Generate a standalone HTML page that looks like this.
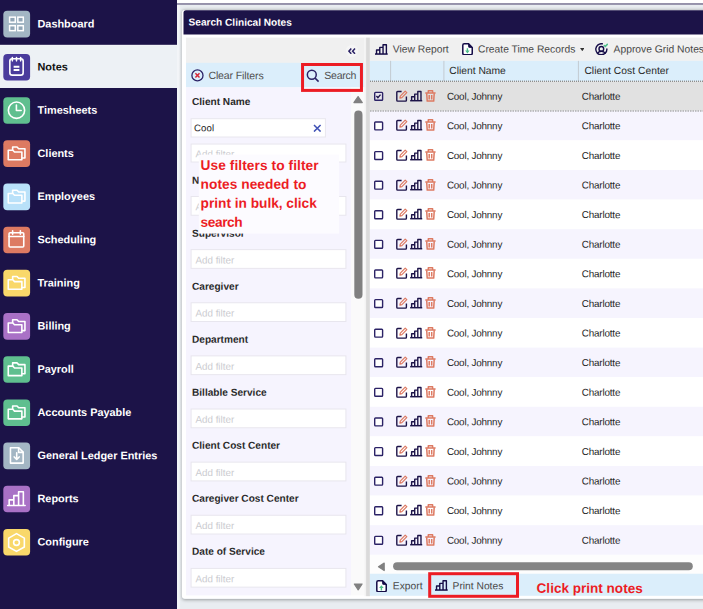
<!DOCTYPE html>
<html><head><meta charset="utf-8"><title>Search Clinical Notes</title>
<style>
*{box-sizing:border-box;margin:0;padding:0}
html,body{width:703px;height:609px;overflow:hidden}
body{position:relative;background:linear-gradient(90deg,#f3f5f8 0,#f3f5f8 179.2px,#e9edf1 180.6px);font-family:"Liberation Sans",sans-serif;color:#222}
.abs{position:absolute}
svg{display:block}
.t{position:absolute;left:0;top:0;transform-origin:0 0;white-space:nowrap;line-height:1}
.ic{position:absolute;left:3.3px;width:26.8px;height:26.8px;border-radius:4px}
.ic svg{width:26.8px;height:26.8px}
.lb{position:absolute;left:37.5px;font-size:10.9px;font-weight:bold;white-space:nowrap;line-height:13px}
.flabel{position:absolute;left:192px;font-size:10.1px;font-weight:bold;color:#2a2a2a;white-space:nowrap;line-height:12px}
</style></head><body>
<div class="abs" style="left:182px;top:10px;width:540px;height:588.5px;border-radius:3px;box-shadow:0 0.5px 3.5px rgba(0,0,0,.34)"></div>
<svg class="abs" style="left:0;top:0" width="703" height="609" viewBox="0 0 703 609">
<rect x="177.00" y="0.00" width="526.00" height="3.20" fill="#fff"/>
<rect x="177.00" y="3.20" width="526.00" height="1.55" fill="#7f7a98"/>
<defs><linearGradient id="sh" x1="0" x2="1" y1="0" y2="0"><stop offset="0" stop-color="#f3f5f8"/><stop offset=".4" stop-color="#eceff2"/><stop offset=".96" stop-color="#d5d8dd"/></linearGradient><linearGradient id="shb" x1="0" x2="0" y1="0" y2="1"><stop offset="0" stop-color="#b9bcc1"/><stop offset=".5" stop-color="#d6d9de"/><stop offset="1" stop-color="#e9edf1"/></linearGradient></defs>
<rect x="0.00" y="0.00" width="177.00" height="609.00" fill="#1c1348"/>
<rect x="0.00" y="44.90" width="177.00" height="43.10" fill="#edf1f5"/>
<rect x="0.00" y="44.90" width="177.00" height="0.80" fill="#f4f6f9"/>
<path d="M703 10.2H184.9a3 3 0 0 0-3 3V595.6a3 3 0 0 0 3 3H703z" fill="#fff"/>
<path d="M703 10.2H186a2.5 2.5 0 0 0-2.5 2.5V34.5H703z" fill="#1c1348"/>
<rect x="186.00" y="37.60" width="178.60" height="25.30" fill="#f0f0f0"/>
<circle cx="352" cy="51" r="6.2" fill="#f5f5f5"/>
<rect x="186.00" y="62.80" width="178.60" height="24.60" fill="#dbeefb"/>
<rect x="186.00" y="87.40" width="165.00" height="508.00" fill="#f6f4fe"/>
<rect x="351.00" y="87.40" width="13.60" height="508.00" fill="#fafafa"/>
<rect x="364.40" y="37.60" width="1.80" height="558.60" fill="#f3f3f3"/>
<rect x="366.10" y="37.60" width="3.80" height="558.60" fill="#dadada"/>
<rect x="369.90" y="37.60" width="333.10" height="23.30" fill="#f0f0f0"/>
<rect x="369.90" y="60.85" width="333.10" height="20.40" fill="#dbeefb"/>
<rect x="390.10" y="60.85" width="1.00" height="20.40" fill="#c3cad1"/>
<rect x="443.40" y="60.85" width="1.00" height="20.40" fill="#c3cad1"/>
<rect x="577.90" y="60.85" width="1.00" height="20.40" fill="#c3cad1"/>
<rect x="369.90" y="81.20" width="333.10" height="29.62" fill="#e1e1e1"/>
<rect x="369.90" y="110.80" width="333.10" height="29.62" fill="#f6f4fe"/>
<rect x="369.90" y="140.40" width="333.10" height="29.62" fill="#fff"/>
<rect x="369.90" y="170.00" width="333.10" height="29.62" fill="#f6f4fe"/>
<rect x="369.90" y="199.60" width="333.10" height="29.62" fill="#fff"/>
<rect x="369.90" y="229.20" width="333.10" height="29.62" fill="#f6f4fe"/>
<rect x="369.90" y="258.80" width="333.10" height="29.62" fill="#fff"/>
<rect x="369.90" y="288.40" width="333.10" height="29.62" fill="#f6f4fe"/>
<rect x="369.90" y="318.00" width="333.10" height="29.62" fill="#fff"/>
<rect x="369.90" y="347.60" width="333.10" height="29.62" fill="#f6f4fe"/>
<rect x="369.90" y="377.20" width="333.10" height="29.62" fill="#fff"/>
<rect x="369.90" y="406.80" width="333.10" height="29.62" fill="#f6f4fe"/>
<rect x="369.90" y="436.40" width="333.10" height="29.62" fill="#fff"/>
<rect x="369.90" y="466.00" width="333.10" height="29.62" fill="#f6f4fe"/>
<rect x="369.90" y="495.60" width="333.10" height="29.62" fill="#fff"/>
<rect x="369.90" y="525.20" width="333.10" height="29.62" fill="#f6f4fe"/>
<rect x="369.90" y="554.80" width="333.10" height="19.40" fill="#fdfdfd"/>
<rect x="369.90" y="573.75" width="333.10" height="22.05" fill="#dbeefb"/>
<rect x="393.10" y="562.20" width="299.70" height="8.10" fill="#848484" rx="4.05"/>
<path d="M384.2 563.1L378.5 566.8 384.2 570.5z" fill="#808080" stroke="#808080" stroke-width="1.2" stroke-linejoin="round"/>
<path d="M353.9 102.6L358.1 96.6 362.3 102.6z" fill="#808080" stroke="#808080" stroke-width="1.2" stroke-linejoin="round"/>
<rect x="354.30" y="110.60" width="8.20" height="188.20" fill="#808080" rx="4.1"/>
<path d="M354.3 584L358.2 589.8 362.1 584z" fill="#808080" stroke="#808080" stroke-width="1.2" stroke-linejoin="round"/>
<rect x="3.3" y="10.85" width="26.8" height="26.6" rx="4" fill="#a3b6c4"/><g transform="translate(3.3,10.75) scale(0.9926)"><g stroke="#fff" fill="none" stroke-width="1.6" stroke-linejoin="round" stroke-linecap="round"><g fill="#91a5b6" stroke-width="1.5" stroke-linejoin="miter"><rect x="6.35" y="6.45" width="5.7" height="5.1"/><rect x="14.65" y="6.45" width="5.5" height="5.1"/><rect x="6.35" y="15.05" width="5.7" height="5"/><rect x="14.65" y="15.05" width="5.5" height="5"/></g></g></g>
<rect x="3.3" y="54.02" width="26.8" height="26.6" rx="4" fill="#4a3b9c"/><g transform="translate(3.3,53.92) scale(0.9926)"><g stroke="#fff" fill="none" stroke-width="1.6" stroke-linejoin="round" stroke-linecap="round"><rect x="6.6" y="4.8" width="13.4" height="16.6" rx="2.4"/><path d="M9.1 3.6v3.4M13.3 3.6v3.4M17.5 3.6v3.4"/><path d="M10.4 12.9h5.8M10.4 16.1h5.8" stroke-width="2" stroke-linecap="butt"/></g></g>
<rect x="3.3" y="97.19" width="26.8" height="26.6" rx="4" fill="#5fbf8f"/><g transform="translate(3.3,97.09) scale(0.9926)"><g stroke="#fff" fill="none" stroke-width="1.6" stroke-linejoin="round" stroke-linecap="round"><circle cx="13.3" cy="13.2" r="8.2"/><path d="M13.2 8v5.5h4.8"/></g></g>
<rect x="3.3" y="140.36" width="26.8" height="26.6" rx="4" fill="#dd7a62"/><g transform="translate(3.3,140.26) scale(0.9926)"><g stroke="#fff" fill="none" stroke-width="1.6" stroke-linejoin="round" stroke-linecap="round"><path d="M9.4 9.6V6.8h4.4l1.7 1.8h6.3v9.2h-2.6"/><path d="M5 10.1h4.6l1.7 1.8h7.4v7.8H5z"/></g></g>
<rect x="3.3" y="183.53" width="26.8" height="26.6" rx="4" fill="#b9e1f9"/><g transform="translate(3.3,183.43) scale(0.9926)"><g stroke="#fff" fill="none" stroke-width="1.6" stroke-linejoin="round" stroke-linecap="round"><path d="M9.4 9.6V6.8h4.4l1.7 1.8h6.3v9.2h-2.6"/><path d="M5 10.1h4.6l1.7 1.8h7.4v7.8H5z"/></g></g>
<rect x="3.3" y="226.70" width="26.8" height="26.6" rx="4" fill="#dd7a62"/><g transform="translate(3.3,226.60) scale(0.9926)"><g stroke="#fff" fill="none" stroke-width="1.6" stroke-linejoin="round" stroke-linecap="round"><rect x="5.8" y="6.2" width="14.8" height="14.4" rx="1"/><path d="M5.8 9.9h14.8M9.4 4.3v3.3M17.2 4.3v3.3"/></g></g>
<rect x="3.3" y="269.87" width="26.8" height="26.6" rx="4" fill="#f9d86a"/><g transform="translate(3.3,269.77) scale(0.9926)"><g stroke="#fff" fill="none" stroke-width="1.6" stroke-linejoin="round" stroke-linecap="round"><path d="M9.4 9.6V6.8h4.4l1.7 1.8h6.3v9.2h-2.6"/><path d="M5 10.1h4.6l1.7 1.8h7.4v7.8H5z"/></g></g>
<rect x="3.3" y="313.04" width="26.8" height="26.6" rx="4" fill="#a971c6"/><g transform="translate(3.3,312.94) scale(0.9926)"><g stroke="#fff" fill="none" stroke-width="1.6" stroke-linejoin="round" stroke-linecap="round"><path d="M9.4 9.6V6.8h4.4l1.7 1.8h6.3v9.2h-2.6"/><path d="M5 10.1h4.6l1.7 1.8h7.4v7.8H5z"/></g></g>
<rect x="3.3" y="356.21" width="26.8" height="26.6" rx="4" fill="#5fbf8f"/><g transform="translate(3.3,356.11) scale(0.9926)"><g stroke="#fff" fill="none" stroke-width="1.6" stroke-linejoin="round" stroke-linecap="round"><path d="M9.4 9.6V6.8h4.4l1.7 1.8h6.3v9.2h-2.6"/><path d="M5 10.1h4.6l1.7 1.8h7.4v7.8H5z"/></g></g>
<rect x="3.3" y="399.38" width="26.8" height="26.6" rx="4" fill="#5fbf8f"/><g transform="translate(3.3,399.28) scale(0.9926)"><g stroke="#fff" fill="none" stroke-width="1.6" stroke-linejoin="round" stroke-linecap="round"><path d="M9.4 9.6V6.8h4.4l1.7 1.8h6.3v9.2h-2.6"/><path d="M5 10.1h4.6l1.7 1.8h7.4v7.8H5z"/></g></g>
<rect x="3.3" y="442.55" width="26.8" height="26.6" rx="4" fill="#a3b6c4"/><g transform="translate(3.3,442.45) scale(0.9926)"><g stroke="#fff" fill="none" stroke-width="1.6" stroke-linejoin="round" stroke-linecap="round"><path d="M7.2 5.4h8.4l4.4 4.4v11H7.2z"/><path d="M15.4 5.6v4.4h4.4"/><path d="M13.5 10.4v6.6M11 14.6l2.5 2.6 2.5-2.6"/></g></g>
<rect x="3.3" y="485.72" width="26.8" height="26.6" rx="4" fill="#a971c6"/><g transform="translate(3.3,485.62) scale(0.9926)"><g stroke="#fff" fill="none" stroke-width="1.6" stroke-linejoin="round" stroke-linecap="round"><path d="M5.9 19.9V14.4H10.6V19.9M10.6 19.9V10.1H15.4V19.9M15.4 19.9V6.2H20.2V19.9M4.4 19.95H22"/></g></g>
<rect x="3.3" y="528.89" width="26.8" height="26.6" rx="4" fill="#f9d86a"/><g transform="translate(3.3,528.79) scale(0.9926)"><g stroke="#fff" fill="none" stroke-width="1.6" stroke-linejoin="round" stroke-linecap="round"><path d="M13.3 4.9l7.9 4.5v8.9l-7.9 4.5-7.9-4.5V9.4z"/><circle cx="13.3" cy="13.8" r="2.9"/></g></g>
<rect x="191.1" y="118.70" width="134.30" height="18.30" fill="#fff" stroke="#e8e6ee" stroke-width="1"/>
<rect x="191.1" y="144.05" width="154.80" height="17.95" fill="#fff" stroke="#e8e6ee" stroke-width="1"/>
<rect x="191.1" y="196.49" width="154.80" height="18.75" fill="#fff" stroke="#e8e6ee" stroke-width="1"/>
<rect x="191.1" y="249.62" width="154.80" height="18.75" fill="#fff" stroke="#e8e6ee" stroke-width="1"/>
<rect x="191.1" y="302.75" width="154.80" height="18.75" fill="#fff" stroke="#e8e6ee" stroke-width="1"/>
<rect x="191.1" y="355.88" width="154.80" height="18.75" fill="#fff" stroke="#e8e6ee" stroke-width="1"/>
<rect x="191.1" y="409.01" width="154.80" height="18.75" fill="#fff" stroke="#e8e6ee" stroke-width="1"/>
<rect x="191.1" y="462.14" width="154.80" height="18.75" fill="#fff" stroke="#e8e6ee" stroke-width="1"/>
<rect x="191.1" y="515.27" width="154.80" height="18.75" fill="#fff" stroke="#e8e6ee" stroke-width="1"/>
<rect x="191.1" y="568.40" width="154.80" height="18.75" fill="#fff" stroke="#e8e6ee" stroke-width="1"/>
<rect x="374.7" y="92.40" width="7.9" height="7.9" rx="0.8" fill="#e9e7ef" stroke="#2b2266" stroke-width="1.4"/>
<path d="M376.4 96.10l1.5 1.5 2.6-3" fill="none" stroke="#1c1348" stroke-width="1.4"/>
<rect x="374.7" y="122.00" width="7.9" height="7.9" rx="0.8" fill="#fff" stroke="#2b2266" stroke-width="1.4"/>
<rect x="374.7" y="151.60" width="7.9" height="7.9" rx="0.8" fill="#fff" stroke="#2b2266" stroke-width="1.4"/>
<rect x="374.7" y="181.20" width="7.9" height="7.9" rx="0.8" fill="#fff" stroke="#2b2266" stroke-width="1.4"/>
<rect x="374.7" y="210.80" width="7.9" height="7.9" rx="0.8" fill="#fff" stroke="#2b2266" stroke-width="1.4"/>
<rect x="374.7" y="240.40" width="7.9" height="7.9" rx="0.8" fill="#fff" stroke="#2b2266" stroke-width="1.4"/>
<rect x="374.7" y="270.00" width="7.9" height="7.9" rx="0.8" fill="#fff" stroke="#2b2266" stroke-width="1.4"/>
<rect x="374.7" y="299.60" width="7.9" height="7.9" rx="0.8" fill="#fff" stroke="#2b2266" stroke-width="1.4"/>
<rect x="374.7" y="329.20" width="7.9" height="7.9" rx="0.8" fill="#fff" stroke="#2b2266" stroke-width="1.4"/>
<rect x="374.7" y="358.80" width="7.9" height="7.9" rx="0.8" fill="#fff" stroke="#2b2266" stroke-width="1.4"/>
<rect x="374.7" y="388.40" width="7.9" height="7.9" rx="0.8" fill="#fff" stroke="#2b2266" stroke-width="1.4"/>
<rect x="374.7" y="418.00" width="7.9" height="7.9" rx="0.8" fill="#fff" stroke="#2b2266" stroke-width="1.4"/>
<rect x="374.7" y="447.60" width="7.9" height="7.9" rx="0.8" fill="#fff" stroke="#2b2266" stroke-width="1.4"/>
<rect x="374.7" y="477.20" width="7.9" height="7.9" rx="0.8" fill="#fff" stroke="#2b2266" stroke-width="1.4"/>
<rect x="374.7" y="506.80" width="7.9" height="7.9" rx="0.8" fill="#fff" stroke="#2b2266" stroke-width="1.4"/>
<rect x="374.7" y="536.40" width="7.9" height="7.9" rx="0.8" fill="#fff" stroke="#2b2266" stroke-width="1.4"/>
</svg>
<div class="t" style="transform:translate(37.50px,18.40px) rotate(0.05deg);font-size:10.9px;color:#fff;font-weight:bold">Dashboard</div>
<div class="t" style="transform:translate(37.50px,61.57px) rotate(0.05deg);font-size:10.9px;color:#111;font-weight:bold">Notes</div>
<div class="t" style="transform:translate(37.50px,104.74px) rotate(0.05deg);font-size:10.9px;color:#fff;font-weight:bold">Timesheets</div>
<div class="t" style="transform:translate(37.50px,147.91px) rotate(0.05deg);font-size:10.9px;color:#fff;font-weight:bold">Clients</div>
<div class="t" style="transform:translate(37.50px,191.08px) rotate(0.05deg);font-size:10.9px;color:#fff;font-weight:bold">Employees</div>
<div class="t" style="transform:translate(37.50px,234.25px) rotate(0.05deg);font-size:10.9px;color:#fff;font-weight:bold">Scheduling</div>
<div class="t" style="transform:translate(37.50px,277.42px) rotate(0.05deg);font-size:10.9px;color:#fff;font-weight:bold">Training</div>
<div class="t" style="transform:translate(37.50px,320.59px) rotate(0.05deg);font-size:10.9px;color:#fff;font-weight:bold">Billing</div>
<div class="t" style="transform:translate(37.50px,363.76px) rotate(0.05deg);font-size:10.9px;color:#fff;font-weight:bold">Payroll</div>
<div class="t" style="transform:translate(37.50px,406.93px) rotate(0.05deg);font-size:10.9px;color:#fff;font-weight:bold">Accounts Payable</div>
<div class="t" style="transform:translate(37.50px,450.10px) rotate(0.05deg);font-size:10.9px;color:#fff;font-weight:bold">General Ledger Entries</div>
<div class="t" style="transform:translate(37.50px,493.27px) rotate(0.05deg);font-size:10.9px;color:#fff;font-weight:bold">Reports</div>
<div class="t" style="transform:translate(37.50px,536.44px) rotate(0.05deg);font-size:10.9px;color:#fff;font-weight:bold">Configure</div>
<div class="t" style="transform:translate(188.60px,17.60px) rotate(0.05deg);font-size:10.1px;color:#fff;font-weight:bold">Search Clinical Notes</div>
<svg class="abs" style="left:348.1px;top:47.8px" width="7.8" height="6.4" viewBox="0 0 7.8 6.4"><path d="M3.3 0.6L0.9 3.2l2.4 2.6M7 0.6L4.6 3.2 7 5.8" fill="none" stroke="#2b2266" stroke-width="1.5"/></svg>
<svg class="abs" style="left:190.6px;top:69px" width="13" height="13" viewBox="0 0 13 13"><circle cx="6.45" cy="6.4" r="5.55" fill="none" stroke="#2b2266" stroke-width="1.3"/><path d="M4.4 4.3l4.1 4.2M8.5 4.3L4.4 8.5" stroke="#d62839" stroke-width="1.5" fill="none"/></svg>
<div class="t" style="transform:translate(208.40px,70.10px) rotate(0.05deg);font-size:10.55px;color:#505050;letter-spacing:-0.13px">Clear Filters</div>
<svg class="abs" style="left:306px;top:68.6px" width="14" height="14" viewBox="0 0 14 14"><circle cx="5.8" cy="5.8" r="4.45" fill="none" stroke="#2b2266" stroke-width="1.5"/><path d="M9.1 9.1l3.5 3.5" stroke="#2b2266" stroke-width="1.5" fill="none"/></svg>
<div class="t" style="transform:translate(324.30px,70.10px) rotate(0.05deg);font-size:10.55px;color:#505050;letter-spacing:-0.27px">Search</div>
<div class="t" style="transform:translate(192.00px,97.05px) rotate(0.05deg);font-size:10.1px;color:#2a2a2a;font-weight:bold">Client Name</div>
<div class="t" style="transform:translate(192.00px,175.65px) rotate(0.05deg);font-size:10.1px;color:#2a2a2a;font-weight:bold">Note Type</div>
<div class="t" style="transform:translate(192.00px,228.65px) rotate(0.05deg);font-size:10.1px;color:#2a2a2a;font-weight:bold">Supervisor</div>
<div class="t" style="transform:translate(192.00px,281.65px) rotate(0.05deg);font-size:10.1px;color:#2a2a2a;font-weight:bold">Caregiver</div>
<div class="t" style="transform:translate(192.00px,334.65px) rotate(0.05deg);font-size:10.1px;color:#2a2a2a;font-weight:bold">Department</div>
<div class="t" style="transform:translate(192.00px,387.65px) rotate(0.05deg);font-size:10.1px;color:#2a2a2a;font-weight:bold">Billable Service</div>
<div class="t" style="transform:translate(192.00px,440.65px) rotate(0.05deg);font-size:10.1px;color:#2a2a2a;font-weight:bold">Client Cost Center</div>
<div class="t" style="transform:translate(192.00px,493.65px) rotate(0.05deg);font-size:10.1px;color:#2a2a2a;font-weight:bold">Caregiver Cost Center</div>
<div class="t" style="transform:translate(192.00px,546.65px) rotate(0.05deg);font-size:10.1px;color:#2a2a2a;font-weight:bold">Date of Service</div>
<div class="t" style="transform:translate(194.00px,123.20px) rotate(0.05deg);font-size:9.6px;color:#1c1c1c;letter-spacing:0.15px">Cool</div>
<svg class="abs" style="left:313.3px;top:123.8px" width="8.6" height="8.6" viewBox="0 0 8.6 8.6"><path d="M1 1l6.6 6.6M7.6 1L1 7.6" stroke="#3f51b5" stroke-width="1.5" fill="none"/></svg>
<div class="t" style="transform:translate(195.50px,149.30px) rotate(0.05deg);font-size:9.8px;color:#cbcbd0">Add filter</div>
<div class="t" style="transform:translate(195.50px,202.29px) rotate(0.05deg);font-size:9.8px;color:#cbcbd0">Add filter</div>
<div class="t" style="transform:translate(195.50px,255.42px) rotate(0.05deg);font-size:9.8px;color:#cbcbd0">Add filter</div>
<div class="t" style="transform:translate(195.50px,308.55px) rotate(0.05deg);font-size:9.8px;color:#cbcbd0">Add filter</div>
<div class="t" style="transform:translate(195.50px,361.68px) rotate(0.05deg);font-size:9.8px;color:#cbcbd0">Add filter</div>
<div class="t" style="transform:translate(195.50px,414.81px) rotate(0.05deg);font-size:9.8px;color:#cbcbd0">Add filter</div>
<div class="t" style="transform:translate(195.50px,467.94px) rotate(0.05deg);font-size:9.8px;color:#cbcbd0">Add filter</div>
<div class="t" style="transform:translate(195.50px,521.07px) rotate(0.05deg);font-size:9.8px;color:#cbcbd0">Add filter</div>
<div class="t" style="transform:translate(195.50px,574.20px) rotate(0.05deg);font-size:9.8px;color:#cbcbd0">Add filter</div>
<svg class="abs" style="left:0;top:0" width="703" height="609"><rect x="198.8" y="154.6" width="140.3" height="79" fill="#fcfbff"/></svg>
<div class="t" style="transform:translate(200.60px,158.85px) rotate(0.05deg);font-size:13.7px;color:#ec1c24;font-weight:bold;letter-spacing:0.08px">Use filters to filter</div>
<div class="t" style="transform:translate(200.60px,177.80px) rotate(0.05deg);font-size:13.7px;color:#ec1c24;font-weight:bold;letter-spacing:0.06px">notes needed to</div>
<div class="t" style="transform:translate(200.60px,196.75px) rotate(0.05deg);font-size:13.7px;color:#ec1c24;font-weight:bold;letter-spacing:-0.01px">print in bulk, click</div>
<div class="t" style="transform:translate(200.60px,215.70px) rotate(0.05deg);font-size:13.7px;color:#ec1c24;font-weight:bold;letter-spacing:-0.41px">search</div>
<svg class="abs" style="left:375.4px;top:43.7px" width="12.7" height="11" viewBox="0 0 12.7 11"><g fill="none" stroke="#150c47" stroke-width="1.4" stroke-linejoin="round"><path d="M1.55 10V6H4.8V10M4.8 10V3.35H8.05V10M8.05 10V0.75H11.4V10"/><path d="M0 10.05H12.7" stroke-width="1.5"/></g></svg>
<div class="t" style="transform:translate(392.80px,44.40px) rotate(0.05deg);font-size:10.3px;color:#484848">View Report</div>
<svg class="abs" style="left:461.9px;top:42.8px" width="11.1" height="12.6" viewBox="0 0 11.1 12.6"><path d="M0.8 2.2a1.4 1.4 0 0 1 1.4-1.4h4.4l3.65 3.8v5.75a1.4 1.4 0 0 1-1.4 1.4H2.2a1.4 1.4 0 0 1-1.4-1.4z" fill="#fff" stroke="#150c47" stroke-width="1.5" stroke-linejoin="round"/><path d="M6.5 0.8v2.7a1 1 0 0 0 1 1h2.75z" fill="#150c47" stroke="#150c47" stroke-width="0.8" stroke-linejoin="round"/><path d="M4.7 5.2h1.4v2.4h1.6L5.4 10.5 3.1 7.6h1.6z" fill="#4fbf8b"/></svg>
<div class="t" style="transform:translate(478.00px,44.40px) rotate(0.05deg);font-size:10.3px;color:#484848">Create Time Records</div>
<svg class="abs" style="left:579.6px;top:48.2px" width="4.6" height="3.2" viewBox="0 0 4.6 3.2"><path d="M0 0h4.6L2.3 3.2z" fill="#333"/></svg>
<svg class="abs" style="left:595.4px;top:42.7px" width="13" height="12.7" viewBox="0 0 13 12.7"><g fill="none" stroke="#150c47" stroke-width="1.4" stroke-linecap="round"><path d="M7.31 0.78A5.55 5.55 0 1 0 11.89 5.96"/><circle cx="6.35" cy="5.9" r="2.35"/><path d="M2.6 10.3C3.3 8.7 4.7 8.2 6.35 8.2S9.4 8.7 10.1 10.3"/></g><path d="M9.3 2.5l1 .9 2-2" fill="none" stroke="#4fbf8b" stroke-width="1.5" stroke-linecap="round"/></svg>
<div class="t" style="transform:translate(613.60px,44.40px) rotate(0.05deg);font-size:10.3px;color:#484848">Approve Grid Notes</div>
<div class="t" style="transform:translate(449.20px,66.00px) rotate(0.05deg);font-size:10.3px;color:#2a2a2a">Client Name</div>
<div class="t" style="transform:translate(584.40px,66.00px) rotate(0.05deg);font-size:10.3px;color:#2a2a2a;letter-spacing:0.03px">Client Cost Center</div>
<svg class="abs" style="left:395.5px;top:89.8px" width="42" height="12" viewBox="0 0 42 12"><g fill="none" stroke-linejoin="round"><path d="M5.6 1.5H1.6a.8.8 0 0 0-.8.8v8a.8.8 0 0 0 .8.8h8a.8.8 0 0 0 .8-.8V6.6" stroke="#1c1348" stroke-width="1.4"/><path d="M4.3 6.1L9.2 1.1l1.6 1.6L5.9 7.7l-2 .4z" stroke="#dd7a62" stroke-width="1.2"/></g><g transform="translate(14.15,0.8) scale(0.95,0.985)"><g fill="none" stroke="#1c1348" stroke-width="1.45" stroke-linejoin="round"><path d="M1.55 10V6H4.8V10M4.8 10V3.35H8.05V10M8.05 10V0.75H11.4V10"/><path d="M0 10.05H12.7" stroke-width="1.5"/></g></g><g transform="translate(29.2,0)" fill="none" stroke="#dd7a62" stroke-width="1.5" stroke-linejoin="round"><path d="M0.1 2.9h10.3M3.1 2.7V0.8h4.3v1.9"/><path d="M1.5 3.2l.5 7.9h6.5l.5-7.9"/><path d="M4 5.1v4.4M6.5 5.1v4.4"/></g></svg>
<div class="t" style="transform:translate(446.90px,91.70px) rotate(0.05deg);font-size:9.9px;color:#262626;letter-spacing:-0.2px">Cool, Johnny</div>
<div class="t" style="transform:translate(581.70px,91.70px) rotate(0.05deg);font-size:9.9px;color:#262626;letter-spacing:-0.17px">Charlotte</div>
<svg class="abs" style="left:395.5px;top:119.4px" width="42" height="12" viewBox="0 0 42 12"><g fill="none" stroke-linejoin="round"><path d="M5.6 1.5H1.6a.8.8 0 0 0-.8.8v8a.8.8 0 0 0 .8.8h8a.8.8 0 0 0 .8-.8V6.6" stroke="#1c1348" stroke-width="1.4"/><path d="M4.3 6.1L9.2 1.1l1.6 1.6L5.9 7.7l-2 .4z" stroke="#dd7a62" stroke-width="1.2"/></g><g transform="translate(14.15,0.8) scale(0.95,0.985)"><g fill="none" stroke="#1c1348" stroke-width="1.45" stroke-linejoin="round"><path d="M1.55 10V6H4.8V10M4.8 10V3.35H8.05V10M8.05 10V0.75H11.4V10"/><path d="M0 10.05H12.7" stroke-width="1.5"/></g></g><g transform="translate(29.2,0)" fill="none" stroke="#dd7a62" stroke-width="1.5" stroke-linejoin="round"><path d="M0.1 2.9h10.3M3.1 2.7V0.8h4.3v1.9"/><path d="M1.5 3.2l.5 7.9h6.5l.5-7.9"/><path d="M4 5.1v4.4M6.5 5.1v4.4"/></g></svg>
<div class="t" style="transform:translate(446.90px,121.30px) rotate(0.05deg);font-size:9.9px;color:#262626;letter-spacing:-0.2px">Cool, Johnny</div>
<div class="t" style="transform:translate(581.70px,121.30px) rotate(0.05deg);font-size:9.9px;color:#262626;letter-spacing:-0.17px">Charlotte</div>
<svg class="abs" style="left:395.5px;top:149.0px" width="42" height="12" viewBox="0 0 42 12"><g fill="none" stroke-linejoin="round"><path d="M5.6 1.5H1.6a.8.8 0 0 0-.8.8v8a.8.8 0 0 0 .8.8h8a.8.8 0 0 0 .8-.8V6.6" stroke="#1c1348" stroke-width="1.4"/><path d="M4.3 6.1L9.2 1.1l1.6 1.6L5.9 7.7l-2 .4z" stroke="#dd7a62" stroke-width="1.2"/></g><g transform="translate(14.15,0.8) scale(0.95,0.985)"><g fill="none" stroke="#1c1348" stroke-width="1.45" stroke-linejoin="round"><path d="M1.55 10V6H4.8V10M4.8 10V3.35H8.05V10M8.05 10V0.75H11.4V10"/><path d="M0 10.05H12.7" stroke-width="1.5"/></g></g><g transform="translate(29.2,0)" fill="none" stroke="#dd7a62" stroke-width="1.5" stroke-linejoin="round"><path d="M0.1 2.9h10.3M3.1 2.7V0.8h4.3v1.9"/><path d="M1.5 3.2l.5 7.9h6.5l.5-7.9"/><path d="M4 5.1v4.4M6.5 5.1v4.4"/></g></svg>
<div class="t" style="transform:translate(446.90px,150.90px) rotate(0.05deg);font-size:9.9px;color:#262626;letter-spacing:-0.2px">Cool, Johnny</div>
<div class="t" style="transform:translate(581.70px,150.90px) rotate(0.05deg);font-size:9.9px;color:#262626;letter-spacing:-0.17px">Charlotte</div>
<svg class="abs" style="left:395.5px;top:178.6px" width="42" height="12" viewBox="0 0 42 12"><g fill="none" stroke-linejoin="round"><path d="M5.6 1.5H1.6a.8.8 0 0 0-.8.8v8a.8.8 0 0 0 .8.8h8a.8.8 0 0 0 .8-.8V6.6" stroke="#1c1348" stroke-width="1.4"/><path d="M4.3 6.1L9.2 1.1l1.6 1.6L5.9 7.7l-2 .4z" stroke="#dd7a62" stroke-width="1.2"/></g><g transform="translate(14.15,0.8) scale(0.95,0.985)"><g fill="none" stroke="#1c1348" stroke-width="1.45" stroke-linejoin="round"><path d="M1.55 10V6H4.8V10M4.8 10V3.35H8.05V10M8.05 10V0.75H11.4V10"/><path d="M0 10.05H12.7" stroke-width="1.5"/></g></g><g transform="translate(29.2,0)" fill="none" stroke="#dd7a62" stroke-width="1.5" stroke-linejoin="round"><path d="M0.1 2.9h10.3M3.1 2.7V0.8h4.3v1.9"/><path d="M1.5 3.2l.5 7.9h6.5l.5-7.9"/><path d="M4 5.1v4.4M6.5 5.1v4.4"/></g></svg>
<div class="t" style="transform:translate(446.90px,180.50px) rotate(0.05deg);font-size:9.9px;color:#262626;letter-spacing:-0.2px">Cool, Johnny</div>
<div class="t" style="transform:translate(581.70px,180.50px) rotate(0.05deg);font-size:9.9px;color:#262626;letter-spacing:-0.17px">Charlotte</div>
<svg class="abs" style="left:395.5px;top:208.2px" width="42" height="12" viewBox="0 0 42 12"><g fill="none" stroke-linejoin="round"><path d="M5.6 1.5H1.6a.8.8 0 0 0-.8.8v8a.8.8 0 0 0 .8.8h8a.8.8 0 0 0 .8-.8V6.6" stroke="#1c1348" stroke-width="1.4"/><path d="M4.3 6.1L9.2 1.1l1.6 1.6L5.9 7.7l-2 .4z" stroke="#dd7a62" stroke-width="1.2"/></g><g transform="translate(14.15,0.8) scale(0.95,0.985)"><g fill="none" stroke="#1c1348" stroke-width="1.45" stroke-linejoin="round"><path d="M1.55 10V6H4.8V10M4.8 10V3.35H8.05V10M8.05 10V0.75H11.4V10"/><path d="M0 10.05H12.7" stroke-width="1.5"/></g></g><g transform="translate(29.2,0)" fill="none" stroke="#dd7a62" stroke-width="1.5" stroke-linejoin="round"><path d="M0.1 2.9h10.3M3.1 2.7V0.8h4.3v1.9"/><path d="M1.5 3.2l.5 7.9h6.5l.5-7.9"/><path d="M4 5.1v4.4M6.5 5.1v4.4"/></g></svg>
<div class="t" style="transform:translate(446.90px,210.10px) rotate(0.05deg);font-size:9.9px;color:#262626;letter-spacing:-0.2px">Cool, Johnny</div>
<div class="t" style="transform:translate(581.70px,210.10px) rotate(0.05deg);font-size:9.9px;color:#262626;letter-spacing:-0.17px">Charlotte</div>
<svg class="abs" style="left:395.5px;top:237.8px" width="42" height="12" viewBox="0 0 42 12"><g fill="none" stroke-linejoin="round"><path d="M5.6 1.5H1.6a.8.8 0 0 0-.8.8v8a.8.8 0 0 0 .8.8h8a.8.8 0 0 0 .8-.8V6.6" stroke="#1c1348" stroke-width="1.4"/><path d="M4.3 6.1L9.2 1.1l1.6 1.6L5.9 7.7l-2 .4z" stroke="#dd7a62" stroke-width="1.2"/></g><g transform="translate(14.15,0.8) scale(0.95,0.985)"><g fill="none" stroke="#1c1348" stroke-width="1.45" stroke-linejoin="round"><path d="M1.55 10V6H4.8V10M4.8 10V3.35H8.05V10M8.05 10V0.75H11.4V10"/><path d="M0 10.05H12.7" stroke-width="1.5"/></g></g><g transform="translate(29.2,0)" fill="none" stroke="#dd7a62" stroke-width="1.5" stroke-linejoin="round"><path d="M0.1 2.9h10.3M3.1 2.7V0.8h4.3v1.9"/><path d="M1.5 3.2l.5 7.9h6.5l.5-7.9"/><path d="M4 5.1v4.4M6.5 5.1v4.4"/></g></svg>
<div class="t" style="transform:translate(446.90px,239.70px) rotate(0.05deg);font-size:9.9px;color:#262626;letter-spacing:-0.2px">Cool, Johnny</div>
<div class="t" style="transform:translate(581.70px,239.70px) rotate(0.05deg);font-size:9.9px;color:#262626;letter-spacing:-0.17px">Charlotte</div>
<svg class="abs" style="left:395.5px;top:267.4px" width="42" height="12" viewBox="0 0 42 12"><g fill="none" stroke-linejoin="round"><path d="M5.6 1.5H1.6a.8.8 0 0 0-.8.8v8a.8.8 0 0 0 .8.8h8a.8.8 0 0 0 .8-.8V6.6" stroke="#1c1348" stroke-width="1.4"/><path d="M4.3 6.1L9.2 1.1l1.6 1.6L5.9 7.7l-2 .4z" stroke="#dd7a62" stroke-width="1.2"/></g><g transform="translate(14.15,0.8) scale(0.95,0.985)"><g fill="none" stroke="#1c1348" stroke-width="1.45" stroke-linejoin="round"><path d="M1.55 10V6H4.8V10M4.8 10V3.35H8.05V10M8.05 10V0.75H11.4V10"/><path d="M0 10.05H12.7" stroke-width="1.5"/></g></g><g transform="translate(29.2,0)" fill="none" stroke="#dd7a62" stroke-width="1.5" stroke-linejoin="round"><path d="M0.1 2.9h10.3M3.1 2.7V0.8h4.3v1.9"/><path d="M1.5 3.2l.5 7.9h6.5l.5-7.9"/><path d="M4 5.1v4.4M6.5 5.1v4.4"/></g></svg>
<div class="t" style="transform:translate(446.90px,269.30px) rotate(0.05deg);font-size:9.9px;color:#262626;letter-spacing:-0.2px">Cool, Johnny</div>
<div class="t" style="transform:translate(581.70px,269.30px) rotate(0.05deg);font-size:9.9px;color:#262626;letter-spacing:-0.17px">Charlotte</div>
<svg class="abs" style="left:395.5px;top:297.0px" width="42" height="12" viewBox="0 0 42 12"><g fill="none" stroke-linejoin="round"><path d="M5.6 1.5H1.6a.8.8 0 0 0-.8.8v8a.8.8 0 0 0 .8.8h8a.8.8 0 0 0 .8-.8V6.6" stroke="#1c1348" stroke-width="1.4"/><path d="M4.3 6.1L9.2 1.1l1.6 1.6L5.9 7.7l-2 .4z" stroke="#dd7a62" stroke-width="1.2"/></g><g transform="translate(14.15,0.8) scale(0.95,0.985)"><g fill="none" stroke="#1c1348" stroke-width="1.45" stroke-linejoin="round"><path d="M1.55 10V6H4.8V10M4.8 10V3.35H8.05V10M8.05 10V0.75H11.4V10"/><path d="M0 10.05H12.7" stroke-width="1.5"/></g></g><g transform="translate(29.2,0)" fill="none" stroke="#dd7a62" stroke-width="1.5" stroke-linejoin="round"><path d="M0.1 2.9h10.3M3.1 2.7V0.8h4.3v1.9"/><path d="M1.5 3.2l.5 7.9h6.5l.5-7.9"/><path d="M4 5.1v4.4M6.5 5.1v4.4"/></g></svg>
<div class="t" style="transform:translate(446.90px,298.90px) rotate(0.05deg);font-size:9.9px;color:#262626;letter-spacing:-0.2px">Cool, Johnny</div>
<div class="t" style="transform:translate(581.70px,298.90px) rotate(0.05deg);font-size:9.9px;color:#262626;letter-spacing:-0.17px">Charlotte</div>
<svg class="abs" style="left:395.5px;top:326.6px" width="42" height="12" viewBox="0 0 42 12"><g fill="none" stroke-linejoin="round"><path d="M5.6 1.5H1.6a.8.8 0 0 0-.8.8v8a.8.8 0 0 0 .8.8h8a.8.8 0 0 0 .8-.8V6.6" stroke="#1c1348" stroke-width="1.4"/><path d="M4.3 6.1L9.2 1.1l1.6 1.6L5.9 7.7l-2 .4z" stroke="#dd7a62" stroke-width="1.2"/></g><g transform="translate(14.15,0.8) scale(0.95,0.985)"><g fill="none" stroke="#1c1348" stroke-width="1.45" stroke-linejoin="round"><path d="M1.55 10V6H4.8V10M4.8 10V3.35H8.05V10M8.05 10V0.75H11.4V10"/><path d="M0 10.05H12.7" stroke-width="1.5"/></g></g><g transform="translate(29.2,0)" fill="none" stroke="#dd7a62" stroke-width="1.5" stroke-linejoin="round"><path d="M0.1 2.9h10.3M3.1 2.7V0.8h4.3v1.9"/><path d="M1.5 3.2l.5 7.9h6.5l.5-7.9"/><path d="M4 5.1v4.4M6.5 5.1v4.4"/></g></svg>
<div class="t" style="transform:translate(446.90px,328.50px) rotate(0.05deg);font-size:9.9px;color:#262626;letter-spacing:-0.2px">Cool, Johnny</div>
<div class="t" style="transform:translate(581.70px,328.50px) rotate(0.05deg);font-size:9.9px;color:#262626;letter-spacing:-0.17px">Charlotte</div>
<svg class="abs" style="left:395.5px;top:356.2px" width="42" height="12" viewBox="0 0 42 12"><g fill="none" stroke-linejoin="round"><path d="M5.6 1.5H1.6a.8.8 0 0 0-.8.8v8a.8.8 0 0 0 .8.8h8a.8.8 0 0 0 .8-.8V6.6" stroke="#1c1348" stroke-width="1.4"/><path d="M4.3 6.1L9.2 1.1l1.6 1.6L5.9 7.7l-2 .4z" stroke="#dd7a62" stroke-width="1.2"/></g><g transform="translate(14.15,0.8) scale(0.95,0.985)"><g fill="none" stroke="#1c1348" stroke-width="1.45" stroke-linejoin="round"><path d="M1.55 10V6H4.8V10M4.8 10V3.35H8.05V10M8.05 10V0.75H11.4V10"/><path d="M0 10.05H12.7" stroke-width="1.5"/></g></g><g transform="translate(29.2,0)" fill="none" stroke="#dd7a62" stroke-width="1.5" stroke-linejoin="round"><path d="M0.1 2.9h10.3M3.1 2.7V0.8h4.3v1.9"/><path d="M1.5 3.2l.5 7.9h6.5l.5-7.9"/><path d="M4 5.1v4.4M6.5 5.1v4.4"/></g></svg>
<div class="t" style="transform:translate(446.90px,358.10px) rotate(0.05deg);font-size:9.9px;color:#262626;letter-spacing:-0.2px">Cool, Johnny</div>
<div class="t" style="transform:translate(581.70px,358.10px) rotate(0.05deg);font-size:9.9px;color:#262626;letter-spacing:-0.17px">Charlotte</div>
<svg class="abs" style="left:395.5px;top:385.8px" width="42" height="12" viewBox="0 0 42 12"><g fill="none" stroke-linejoin="round"><path d="M5.6 1.5H1.6a.8.8 0 0 0-.8.8v8a.8.8 0 0 0 .8.8h8a.8.8 0 0 0 .8-.8V6.6" stroke="#1c1348" stroke-width="1.4"/><path d="M4.3 6.1L9.2 1.1l1.6 1.6L5.9 7.7l-2 .4z" stroke="#dd7a62" stroke-width="1.2"/></g><g transform="translate(14.15,0.8) scale(0.95,0.985)"><g fill="none" stroke="#1c1348" stroke-width="1.45" stroke-linejoin="round"><path d="M1.55 10V6H4.8V10M4.8 10V3.35H8.05V10M8.05 10V0.75H11.4V10"/><path d="M0 10.05H12.7" stroke-width="1.5"/></g></g><g transform="translate(29.2,0)" fill="none" stroke="#dd7a62" stroke-width="1.5" stroke-linejoin="round"><path d="M0.1 2.9h10.3M3.1 2.7V0.8h4.3v1.9"/><path d="M1.5 3.2l.5 7.9h6.5l.5-7.9"/><path d="M4 5.1v4.4M6.5 5.1v4.4"/></g></svg>
<div class="t" style="transform:translate(446.90px,387.70px) rotate(0.05deg);font-size:9.9px;color:#262626;letter-spacing:-0.2px">Cool, Johnny</div>
<div class="t" style="transform:translate(581.70px,387.70px) rotate(0.05deg);font-size:9.9px;color:#262626;letter-spacing:-0.17px">Charlotte</div>
<svg class="abs" style="left:395.5px;top:415.4px" width="42" height="12" viewBox="0 0 42 12"><g fill="none" stroke-linejoin="round"><path d="M5.6 1.5H1.6a.8.8 0 0 0-.8.8v8a.8.8 0 0 0 .8.8h8a.8.8 0 0 0 .8-.8V6.6" stroke="#1c1348" stroke-width="1.4"/><path d="M4.3 6.1L9.2 1.1l1.6 1.6L5.9 7.7l-2 .4z" stroke="#dd7a62" stroke-width="1.2"/></g><g transform="translate(14.15,0.8) scale(0.95,0.985)"><g fill="none" stroke="#1c1348" stroke-width="1.45" stroke-linejoin="round"><path d="M1.55 10V6H4.8V10M4.8 10V3.35H8.05V10M8.05 10V0.75H11.4V10"/><path d="M0 10.05H12.7" stroke-width="1.5"/></g></g><g transform="translate(29.2,0)" fill="none" stroke="#dd7a62" stroke-width="1.5" stroke-linejoin="round"><path d="M0.1 2.9h10.3M3.1 2.7V0.8h4.3v1.9"/><path d="M1.5 3.2l.5 7.9h6.5l.5-7.9"/><path d="M4 5.1v4.4M6.5 5.1v4.4"/></g></svg>
<div class="t" style="transform:translate(446.90px,417.30px) rotate(0.05deg);font-size:9.9px;color:#262626;letter-spacing:-0.2px">Cool, Johnny</div>
<div class="t" style="transform:translate(581.70px,417.30px) rotate(0.05deg);font-size:9.9px;color:#262626;letter-spacing:-0.17px">Charlotte</div>
<svg class="abs" style="left:395.5px;top:445.0px" width="42" height="12" viewBox="0 0 42 12"><g fill="none" stroke-linejoin="round"><path d="M5.6 1.5H1.6a.8.8 0 0 0-.8.8v8a.8.8 0 0 0 .8.8h8a.8.8 0 0 0 .8-.8V6.6" stroke="#1c1348" stroke-width="1.4"/><path d="M4.3 6.1L9.2 1.1l1.6 1.6L5.9 7.7l-2 .4z" stroke="#dd7a62" stroke-width="1.2"/></g><g transform="translate(14.15,0.8) scale(0.95,0.985)"><g fill="none" stroke="#1c1348" stroke-width="1.45" stroke-linejoin="round"><path d="M1.55 10V6H4.8V10M4.8 10V3.35H8.05V10M8.05 10V0.75H11.4V10"/><path d="M0 10.05H12.7" stroke-width="1.5"/></g></g><g transform="translate(29.2,0)" fill="none" stroke="#dd7a62" stroke-width="1.5" stroke-linejoin="round"><path d="M0.1 2.9h10.3M3.1 2.7V0.8h4.3v1.9"/><path d="M1.5 3.2l.5 7.9h6.5l.5-7.9"/><path d="M4 5.1v4.4M6.5 5.1v4.4"/></g></svg>
<div class="t" style="transform:translate(446.90px,446.90px) rotate(0.05deg);font-size:9.9px;color:#262626;letter-spacing:-0.2px">Cool, Johnny</div>
<div class="t" style="transform:translate(581.70px,446.90px) rotate(0.05deg);font-size:9.9px;color:#262626;letter-spacing:-0.17px">Charlotte</div>
<svg class="abs" style="left:395.5px;top:474.6px" width="42" height="12" viewBox="0 0 42 12"><g fill="none" stroke-linejoin="round"><path d="M5.6 1.5H1.6a.8.8 0 0 0-.8.8v8a.8.8 0 0 0 .8.8h8a.8.8 0 0 0 .8-.8V6.6" stroke="#1c1348" stroke-width="1.4"/><path d="M4.3 6.1L9.2 1.1l1.6 1.6L5.9 7.7l-2 .4z" stroke="#dd7a62" stroke-width="1.2"/></g><g transform="translate(14.15,0.8) scale(0.95,0.985)"><g fill="none" stroke="#1c1348" stroke-width="1.45" stroke-linejoin="round"><path d="M1.55 10V6H4.8V10M4.8 10V3.35H8.05V10M8.05 10V0.75H11.4V10"/><path d="M0 10.05H12.7" stroke-width="1.5"/></g></g><g transform="translate(29.2,0)" fill="none" stroke="#dd7a62" stroke-width="1.5" stroke-linejoin="round"><path d="M0.1 2.9h10.3M3.1 2.7V0.8h4.3v1.9"/><path d="M1.5 3.2l.5 7.9h6.5l.5-7.9"/><path d="M4 5.1v4.4M6.5 5.1v4.4"/></g></svg>
<div class="t" style="transform:translate(446.90px,476.50px) rotate(0.05deg);font-size:9.9px;color:#262626;letter-spacing:-0.2px">Cool, Johnny</div>
<div class="t" style="transform:translate(581.70px,476.50px) rotate(0.05deg);font-size:9.9px;color:#262626;letter-spacing:-0.17px">Charlotte</div>
<svg class="abs" style="left:395.5px;top:504.2px" width="42" height="12" viewBox="0 0 42 12"><g fill="none" stroke-linejoin="round"><path d="M5.6 1.5H1.6a.8.8 0 0 0-.8.8v8a.8.8 0 0 0 .8.8h8a.8.8 0 0 0 .8-.8V6.6" stroke="#1c1348" stroke-width="1.4"/><path d="M4.3 6.1L9.2 1.1l1.6 1.6L5.9 7.7l-2 .4z" stroke="#dd7a62" stroke-width="1.2"/></g><g transform="translate(14.15,0.8) scale(0.95,0.985)"><g fill="none" stroke="#1c1348" stroke-width="1.45" stroke-linejoin="round"><path d="M1.55 10V6H4.8V10M4.8 10V3.35H8.05V10M8.05 10V0.75H11.4V10"/><path d="M0 10.05H12.7" stroke-width="1.5"/></g></g><g transform="translate(29.2,0)" fill="none" stroke="#dd7a62" stroke-width="1.5" stroke-linejoin="round"><path d="M0.1 2.9h10.3M3.1 2.7V0.8h4.3v1.9"/><path d="M1.5 3.2l.5 7.9h6.5l.5-7.9"/><path d="M4 5.1v4.4M6.5 5.1v4.4"/></g></svg>
<div class="t" style="transform:translate(446.90px,506.10px) rotate(0.05deg);font-size:9.9px;color:#262626;letter-spacing:-0.2px">Cool, Johnny</div>
<div class="t" style="transform:translate(581.70px,506.10px) rotate(0.05deg);font-size:9.9px;color:#262626;letter-spacing:-0.17px">Charlotte</div>
<svg class="abs" style="left:395.5px;top:533.8px" width="42" height="12" viewBox="0 0 42 12"><g fill="none" stroke-linejoin="round"><path d="M5.6 1.5H1.6a.8.8 0 0 0-.8.8v8a.8.8 0 0 0 .8.8h8a.8.8 0 0 0 .8-.8V6.6" stroke="#1c1348" stroke-width="1.4"/><path d="M4.3 6.1L9.2 1.1l1.6 1.6L5.9 7.7l-2 .4z" stroke="#dd7a62" stroke-width="1.2"/></g><g transform="translate(14.15,0.8) scale(0.95,0.985)"><g fill="none" stroke="#1c1348" stroke-width="1.45" stroke-linejoin="round"><path d="M1.55 10V6H4.8V10M4.8 10V3.35H8.05V10M8.05 10V0.75H11.4V10"/><path d="M0 10.05H12.7" stroke-width="1.5"/></g></g><g transform="translate(29.2,0)" fill="none" stroke="#dd7a62" stroke-width="1.5" stroke-linejoin="round"><path d="M0.1 2.9h10.3M3.1 2.7V0.8h4.3v1.9"/><path d="M1.5 3.2l.5 7.9h6.5l.5-7.9"/><path d="M4 5.1v4.4M6.5 5.1v4.4"/></g></svg>
<div class="t" style="transform:translate(446.90px,535.70px) rotate(0.05deg);font-size:9.9px;color:#262626;letter-spacing:-0.2px">Cool, Johnny</div>
<div class="t" style="transform:translate(581.70px,535.70px) rotate(0.05deg);font-size:9.9px;color:#262626;letter-spacing:-0.17px">Charlotte</div>
<svg class="abs" style="left:0;top:0" width="703" height="609"><path d="M370 81.2H703" stroke="#666" stroke-width="1" stroke-dasharray="1 1"/><path d="M370 111H703" stroke="#8c8c8c" stroke-width="1" stroke-dasharray="1.5 1"/></svg>
<svg class="abs" style="left:376.1px;top:579.5px" width="11.1" height="12.6" viewBox="0 0 11.1 12.6"><path d="M0.8 2.2a1.4 1.4 0 0 1 1.4-1.4h4.4l3.65 3.8v5.75a1.4 1.4 0 0 1-1.4 1.4H2.2a1.4 1.4 0 0 1-1.4-1.4z" fill="#fff" stroke="#150c47" stroke-width="1.5" stroke-linejoin="round"/><path d="M6.5 0.8v2.7a1 1 0 0 0 1 1h2.75z" fill="#150c47" stroke="#150c47" stroke-width="0.8" stroke-linejoin="round"/><path d="M4.7 10.5h1.4V8.1h1.6L5.4 5.2 3.1 8.1h1.6z" fill="#4fbf8b"/></svg>
<div class="t" style="transform:translate(392.80px,581.30px) rotate(0.05deg);font-size:10.3px;color:#484848">Export</div>
<svg class="abs" style="left:434.9px;top:580.4px" width="12.7" height="11" viewBox="0 0 12.7 11"><g fill="none" stroke="#150c47" stroke-width="1.4" stroke-linejoin="round"><path d="M1.55 10V6H4.8V10M4.8 10V3.35H8.05V10M8.05 10V0.75H11.4V10"/><path d="M0 10.05H12.7" stroke-width="1.5"/></g></svg>
<div class="t" style="transform:translate(452.60px,581.30px) rotate(0.05deg);font-size:10.25px;color:#484848">Print Notes</div>
<div class="t" style="transform:translate(536.60px,581.80px) rotate(0.05deg);font-size:13.55px;color:#ec1c24;font-weight:bold">Click print notes</div>
<svg class="abs" style="left:0;top:0" width="703" height="609" viewBox="0 0 703 609">
<rect x="302.55" y="64.5" width="58.9" height="25.9" fill="none" stroke="#ec1c24" stroke-width="3"/>
<rect x="429.7" y="573.7" width="87.8" height="22.6" fill="none" stroke="#ec1c24" stroke-width="3"/>
</svg>
</body></html>
